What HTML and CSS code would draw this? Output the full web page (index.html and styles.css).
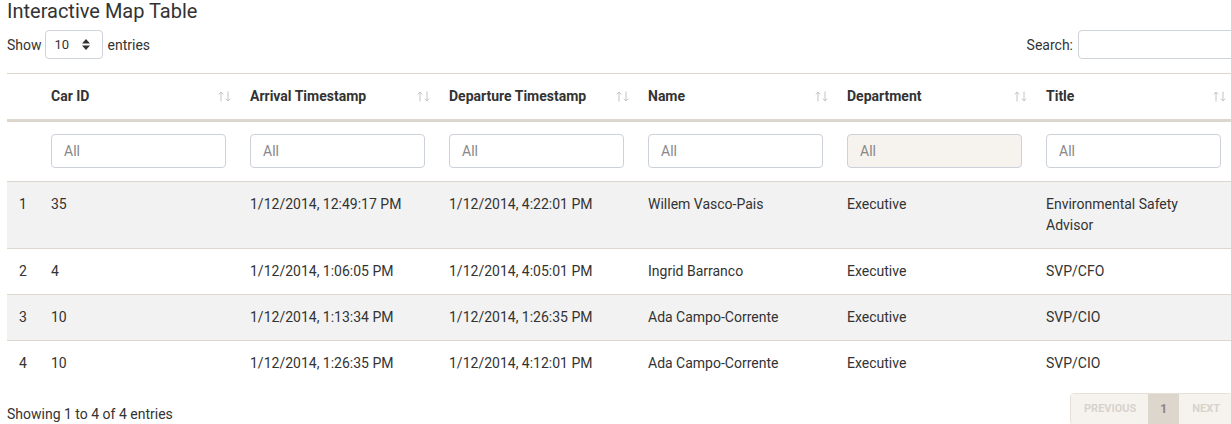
FILE: index.html
```html
<!DOCTYPE html>
<html>
<head>
<meta charset="utf-8">
<link rel="stylesheet" href="styles.css">
</head>
<body>
<div class="page">
  <h1 class="title">Interactive Map Table</h1>
  <div class="controls">
    <div class="length">
      <span>Show</span>
      <div class="select"><span>10</span>
        <svg width="8" height="11" viewBox="0 0 8 11"><path d="M4 0 L8 4.5 L0 4.5 Z M0 6.5 L8 6.5 L4 11 Z" fill="#333"/></svg>
      </div>
      <span>entries</span>
    </div>
    <div class="search">
      <span>Search:</span>
      <div class="search-input"></div>
    </div>
  </div>
  <table class="grid">
    <thead>
      <tr class="head">
        <th class="idx"></th>
        <th><div class="th-in"><span>Car ID</span><svg class="sort" width="13" height="11" viewBox="0 0 13 11"><path d="M3 10.5V1M0.8 3.4L3 1L5.2 3.4M10 0.5V10M7.8 7.6L10 10L12.2 7.6" fill="none" stroke="#c4c4c4" stroke-width="1"/></svg></div></th>
        <th><div class="th-in"><span>Arrival Timestamp</span><svg class="sort" width="13" height="11" viewBox="0 0 13 11"><path d="M3 10.5V1M0.8 3.4L3 1L5.2 3.4M10 0.5V10M7.8 7.6L10 10L12.2 7.6" fill="none" stroke="#c4c4c4" stroke-width="1"/></svg></div></th>
        <th><div class="th-in"><span>Departure Timestamp</span><svg class="sort" width="13" height="11" viewBox="0 0 13 11"><path d="M3 10.5V1M0.8 3.4L3 1L5.2 3.4M10 0.5V10M7.8 7.6L10 10L12.2 7.6" fill="none" stroke="#c4c4c4" stroke-width="1"/></svg></div></th>
        <th><div class="th-in"><span>Name</span><svg class="sort" width="13" height="11" viewBox="0 0 13 11"><path d="M3 10.5V1M0.8 3.4L3 1L5.2 3.4M10 0.5V10M7.8 7.6L10 10L12.2 7.6" fill="none" stroke="#c4c4c4" stroke-width="1"/></svg></div></th>
        <th><div class="th-in"><span>Department</span><svg class="sort" width="13" height="11" viewBox="0 0 13 11"><path d="M3 10.5V1M0.8 3.4L3 1L5.2 3.4M10 0.5V10M7.8 7.6L10 10L12.2 7.6" fill="none" stroke="#c4c4c4" stroke-width="1"/></svg></div></th>
        <th><div class="th-in"><span>Title</span><svg class="sort" width="13" height="11" viewBox="0 0 13 11"><path d="M3 10.5V1M0.8 3.4L3 1L5.2 3.4M10 0.5V10M7.8 7.6L10 10L12.2 7.6" fill="none" stroke="#c4c4c4" stroke-width="1"/></svg></div></th>
      </tr>
      <tr class="filters">
        <td class="idx"></td>
        <td><div class="filter">All</div></td>
        <td><div class="filter">All</div></td>
        <td><div class="filter">All</div></td>
        <td><div class="filter">All</div></td>
        <td><div class="filter filter-off">All</div></td>
        <td><div class="filter">All</div></td>
      </tr>
    </thead>
    <tbody>
      <tr class="odd">
        <td class="idx">1</td><td>35</td><td>1/12/2014, 12:49:17 PM</td><td>1/12/2014, 4:22:01 PM</td><td>Willem Vasco-Pais</td><td>Executive</td><td>Environmental Safety Advisor</td>
      </tr>
      <tr>
        <td class="idx">2</td><td>4</td><td>1/12/2014, 1:06:05 PM</td><td>1/12/2014, 4:05:01 PM</td><td>Ingrid Barranco</td><td>Executive</td><td>SVP/CFO</td>
      </tr>
      <tr class="odd">
        <td class="idx">3</td><td>10</td><td>1/12/2014, 1:13:34 PM</td><td>1/12/2014, 1:26:35 PM</td><td>Ada Campo-Corrente</td><td>Executive</td><td>SVP/CIO</td>
      </tr>
      <tr>
        <td class="idx">4</td><td>10</td><td>1/12/2014, 1:26:35 PM</td><td>1/12/2014, 4:12:01 PM</td><td>Ada Campo-Corrente</td><td>Executive</td><td>SVP/CIO</td>
      </tr>
    </tbody>
  </table>
  <div class="footer">
    <div class="info">Showing 1 to 4 of 4 entries</div>
    <div class="pager">
      <span class="pg pg-prev">Previous</span>
      <span class="pg pg-cur">1</span>
      <span class="pg pg-next">Next</span>
    </div>
  </div>
</div>
</body>
</html>
```
FILE: styles.css
```css
html, body {
  margin: 0;
  padding: 0;
  overflow: hidden;
  background: #fff;
}
body {
  font-family: Roboto, "Liberation Sans", sans-serif;
  font-size: 14px;
  color: #333;
}
.page {
  padding-left: 7px;
  width: 1226px;
}
.title {
  margin: 0;
  font-size: 20px;
  font-weight: 400;
  line-height: 22px;
  color: #333;
}
.controls {
  display: flex;
  justify-content: space-between;
  align-items: center;
  margin-top: 8px;
  height: 29px;
}
.length {
  display: flex;
  align-items: center;
}
.length > span:first-child { margin-right: 3px; }
.length > span:last-child { margin-left: 5px; }
.select {
  box-sizing: border-box;
  width: 58px;
  height: 29px;
  border: 1px solid #cfd3da;
  border-radius: 4px;
  display: flex;
  align-items: center;
  justify-content: space-between;
  padding: 0 12px 0 9px;
  font-size: 13px;
}
.search {
  display: flex;
  align-items: center;
  gap: 5px;
  margin-right: -5px;
}
.search-input {
  box-sizing: border-box;
  width: 160px;
  height: 29px;
  border: 1px solid #cfd3da;
  border-radius: 4px;
}
.grid {
  margin-top: 14px;
  border-collapse: collapse;
  table-layout: fixed;
  width: 1226px;
}
.grid th, .grid td {
  width: 175px;
  padding: 12px;
  text-align: left;
  vertical-align: top;
  line-height: 21px;
}
.grid .idx {
  width: 8px;
}
.head th {
  border-top: 1px solid #ddd6cc;
  border-bottom: 3px solid #ddd6cc;
  font-weight: 700;
  color: #333;
}
.th-in {
  display: flex;
  justify-content: space-between;
  align-items: center;
}
.sort {
  display: block;
  margin-right: -5px;
}
.grid .filters td {
  border-bottom: 1px solid #ddd6cc;
  padding-bottom: 13px;
}
.filter {
  box-sizing: border-box;
  height: 34px;
  border: 1px solid #ccd0d8;
  border-radius: 4px;
  padding: 0 12px;
  line-height: 32px;
  color: #888;
  font-size: 14px;
}
.filter-off {
  background: #f6f3ef;
}
tbody td {
  border-bottom: 1px solid #ddd6cc;
}
tbody tr.odd td {
  background: #f2f2f2;
}
tbody tr:last-child td {
  border-bottom: none;
}
.footer {
  display: flex;
  justify-content: space-between;
  align-items: flex-start;
  margin-top: 9px;
}
.info {
  margin-top: 11px;
  font-size: 14px;
}
.pager {
  display: flex;
  border: 1px solid #e6e0d8;
  border-radius: 4px;
  overflow: hidden;
  margin-right: 0;
  margin-top: -2px;
  height: 30px;
}
.pg {
  font-size: 11px;
  font-weight: 700;
  text-transform: uppercase;
  line-height: 30px;
  padding: 0 12px 0 13px;
  background: #f6f3ef;
  color: #d8d2cb;
}
.pg-cur {
  background: #ddd6cc;
  color: #8a8480;
  font-size: 12px;
  padding: 0 12px;
}
.pg-next { padding-right: 12px; }
```
